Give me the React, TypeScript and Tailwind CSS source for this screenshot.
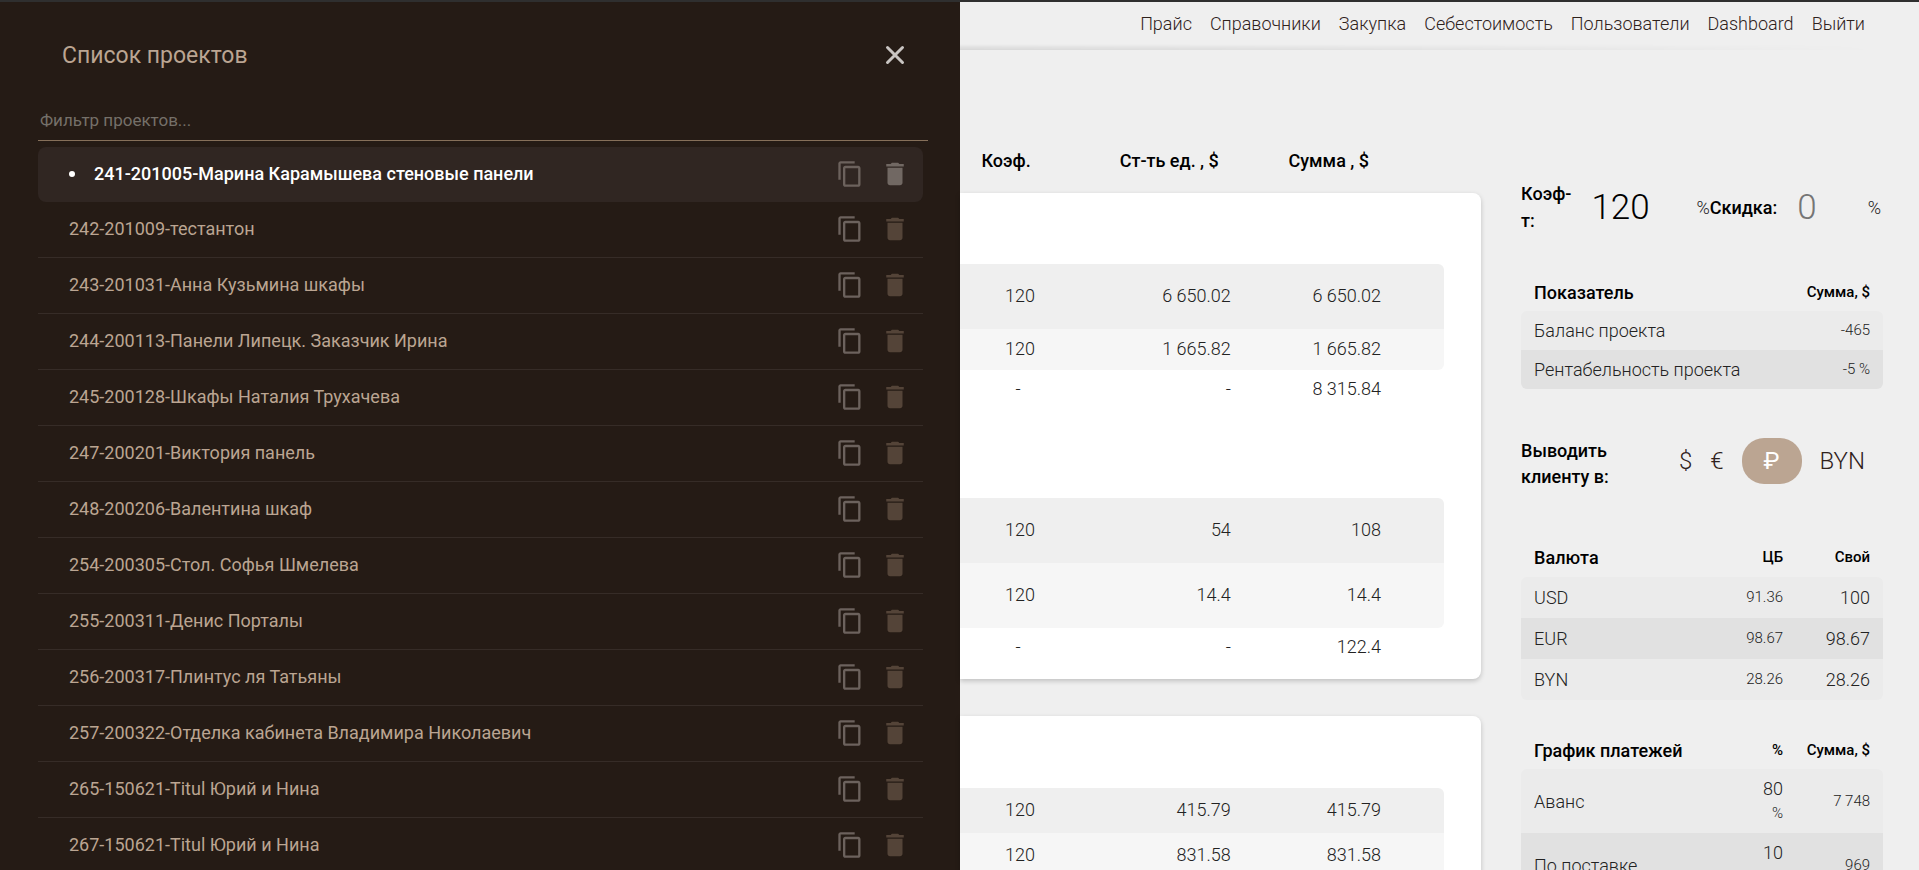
import { useState } from "react"
import { MdContentCopy, MdDelete } from "react-icons/md"

interface IProject {
    id: number
    name: string
}

interface IRow {
    coef: string
    price: string
    total: string
    size: string
}

const projects: IProject[] = [
    { id: 241, name: "241-201005-Марина Карамышева стеновые панели" },
    { id: 242, name: "242-201009-тестантон" },
    { id: 243, name: "243-201031-Анна Кузьмина шкафы" },
    { id: 244, name: "244-200113-Панели Липецк. Заказчик Ирина" },
    { id: 245, name: "245-200128-Шкафы Наталия Трухачева" },
    { id: 247, name: "247-200201-Виктория панель" },
    { id: 248, name: "248-200206-Валентина шкаф" },
    { id: 254, name: "254-200305-Стол. Софья Шмелева" },
    { id: 255, name: "255-200311-Денис Порталы" },
    { id: 256, name: "256-200317-Плинтус ля Татьяны" },
    { id: 257, name: "257-200322-Отделка кабинета Владимира Николаевич" },
    { id: 265, name: "265-150621-Titul Юрий и Нина" },
    { id: 267, name: "267-150621-Titul Юрий и Нина" },
]

const links = ["Прайс", "Справочники", "Закупка", "Себестоимость", "Пользователи", "Dashboard", "Выйти"]

const rates = [
    { code: "USD", cb: "91.36", own: "100" },
    { code: "EUR", cb: "98.67", own: "98.67" },
    { code: "BYN", cb: "28.26", own: "28.26" },
]

const payments = [
    { name: "Аванс", percent: "80", sum: "7 748" },
    { name: "По поставке", percent: "10", sum: "969" },
]

const ProjectsDrawer = () => {
    const [activeId, setActiveId] = useState(241)
    const [filter, setFilter] = useState("")

    const visible = projects.filter((project) => project.name.toLowerCase().includes(filter.toLowerCase()))

    return (
        <aside className="w-1/2 shrink-0 bg-[#251b15] pl-[38px] pr-8 overflow-hidden text-[#bba592]">
            <div className="flex justify-between items-center h-[106px] pl-6 pr-[21px]">
                <h2 className="pt-[2px] text-[23px]">Список проектов</h2>
                <button aria-label="Закрыть" className="text-[#c9c5c2]">
                    <svg viewBox="0 0 24 24" className="size-6" fill="none" stroke="currentColor" strokeWidth="3" strokeLinecap="round">
                        <path d="M4.5 4.5l15 15M19.5 4.5l-15 15" />
                    </svg>
                </button>
            </div>
            <input
                type="text"
                aria-label="Фильтр проектов"
                placeholder="Фильтр проектов..."
                value={filter}
                onChange={(e) => setFilter(e.target.value)}
                className="block w-full h-[33px] pl-[2px] pb-2 border-b border-[#86705a] text-[17px] outline-none placeholder:text-[#757069]"
            />
            <ul className="mt-[6px] mr-[5px]">
                {visible.map((project) => (
                    <li
                        key={project.id}
                        className={
                            project.id === activeId
                                ? "flex items-center h-[55px] rounded-lg pl-[31px] pr-[13px] pb-[2px] bg-[#302622] text-white font-medium"
                                : "flex items-center h-14 border-b border-[#362c27] pl-[31px] pr-[13px] pb-[2px]"
                        }
                    >
                        {project.id === activeId && <span className="size-[6px] rounded-full bg-white mr-[19px]" />}
                        <button onClick={() => setActiveId(project.id)} className="grow text-left text-[18px]">
                            {project.name}
                        </button>
                        <button aria-label="Копировать" className="text-[#6c625d] mr-4">
                            <MdContentCopy className="size-7" />
                        </button>
                        <button aria-label="Удалить" className={project.id === activeId ? "text-[#716863]" : "text-[#544438]"}>
                            <MdDelete className="size-[30px]" />
                        </button>
                    </li>
                ))}
            </ul>
        </aside>
    )
}

const PriceTable = ({ rows, total }: { rows: IRow[]; total?: string }) => (
    <table className="w-full table-fixed border-separate border-spacing-0 text-[18px] font-light text-[#222] [&_td]:pb-[2px]">
        <colgroup>
            <col className="w-[25%]" />
            <col className="w-[31%]" />
            <col className="w-[31%]" />
            <col className="w-[13%]" />
        </colgroup>
        <tbody>
            {rows.map((row, i) => (
                <tr key={i} className={i % 2 === 0 ? "bg-[#efefef]" : "bg-[#f6f6f6]"}>
                    <td className={"text-center " + row.size}>{row.coef}</td>
                    <td className="text-right">{row.price}</td>
                    <td className="text-right">{row.total}</td>
                    <td className={i === 0 ? "rounded-tr-md" : "rounded-br-md"}></td>
                </tr>
            ))}
            {total && (
                <tr>
                    <td className="h-[38px] text-center pr-1">-</td>
                    <td className="text-right">-</td>
                    <td className="text-right">{total}</td>
                    <td></td>
                </tr>
            )}
        </tbody>
    </table>
)

const Estimate = () => (
    <main className="grow min-w-0">
        <div className="grid grid-cols-[25%_31%_31%_13%] items-center mt-[93px] mr-[37px] h-[34px] text-[18px] font-medium text-black">
            <span className="text-center pr-7">Коэф.</span>
            <span className="text-right pr-3">Ст-ть ед. , $</span>
            <span className="text-right pr-3">Сумма , $</span>
        </div>
        <section className="mt-4 rounded-r-lg bg-white shadow-[0_2px_5px_rgba(0,0,0,0.2)] pt-[71px] pr-[37px] pb-[13px]">
            <PriceTable
                total="8 315.84"
                rows={[
                    { coef: "120", price: "6 650.02", total: "6 650.02", size: "h-[65px]" },
                    { coef: "120", price: "1 665.82", total: "1 665.82", size: "h-[41px]" },
                ]}
            />
            <div className="h-[90px]" />
            <PriceTable
                total="122.4"
                rows={[
                    { coef: "120", price: "54", total: "108", size: "h-[65px]" },
                    { coef: "120", price: "14.4", total: "14.4", size: "h-[65px]" },
                ]}
            />
        </section>
        <section className="mt-[37px] rounded-r-lg bg-white shadow-[0_2px_5px_rgba(0,0,0,0.2)] pt-[72px] pr-[37px] pb-[13px]">
            <PriceTable
                rows={[
                    { coef: "120", price: "415.79", total: "415.79", size: "h-[45px]" },
                    { coef: "120", price: "831.58", total: "831.58", size: "h-[45px]" },
                ]}
            />
        </section>
    </main>
)

const sideTable = "w-full table-fixed border-separate border-spacing-0 text-[18px] font-light text-[#222]"
const bodyRows =
    "[&_tr]:bg-[#ebebeb] [&_tr:nth-child(even)]:bg-[#e1e1e1] [&_tr:first-child_td:first-child]:rounded-tl-md [&_tr:first-child_td:last-child]:rounded-tr-md [&_tr:last-child_td:first-child]:rounded-bl-md [&_tr:last-child_td:last-child]:rounded-br-md"

const Summary = () => {
    const [currency, setCurrency] = useState("₽")

    return (
        <aside className="w-[362px] shrink-0 ml-10 mr-9 pt-[130px]">
            <div className="flex items-center h-[54px] text-[18px] leading-[27px]">
                <label htmlFor="coef" className="w-[52px] font-medium text-black">
                    Коэф-т:
                </label>
                <input id="coef" defaultValue="120" className="w-[105px] ml-5 text-[35px] font-light text-black outline-none" />
                <span className="font-light text-[#222]">%</span>
                <label htmlFor="discount" className="font-medium text-black">
                    Скидка:
                </label>
                <input id="discount" placeholder="0" className="grow min-w-0 ml-5 text-[35px] font-light outline-none placeholder:text-[#757575]" />
                <span className="pr-[2px] font-light text-[#222]">%</span>
            </div>

            <table className={sideTable + " mt-[39px]"}>
                <thead className="text-black">
                    <tr>
                        <th className="h-[38px] pl-[13px] text-left font-medium">Показатель</th>
                        <th className="w-[110px] pr-[13px] text-right text-[15px] font-medium">Сумма, $</th>
                    </tr>
                </thead>
                <tbody className={bodyRows}>
                    <tr>
                        <td className="h-[39px] pl-[13px]">Баланс проекта</td>
                        <td className="pr-[13px] text-right text-[15px]">-465</td>
                    </tr>
                    <tr>
                        <td className="h-[39px] pl-[13px]">Рентабельность проекта</td>
                        <td className="pr-[13px] text-right text-[15px]">-5 %</td>
                    </tr>
                </tbody>
            </table>

            <div className="flex justify-between items-start mt-[49px] h-[52px]">
                <span className="w-[100px] text-[18px] leading-[26px] font-medium text-black">Выводить клиенту в:</span>
                <div className="flex items-center gap-[18px] pr-[18px] text-[24px] font-light text-[#2f221c]">
                    {["$", "€", "₽", "BYN"].map((item) => (
                        <button
                            key={item}
                            onClick={() => setCurrency(item)}
                            className={item === currency ? "w-[60px] h-[46px] rounded-[22px] bg-[#bba592] text-white font-normal" : ""}
                        >
                            {item}
                        </button>
                    ))}
                </div>
            </div>

            <table className={sideTable + " mt-[47px]"}>
                <thead className="text-black">
                    <tr>
                        <th className="h-10 pl-[13px] text-left font-medium">Валюта</th>
                        <th className="w-[80px] text-right text-[15px] font-medium">ЦБ</th>
                        <th className="w-[100px] pr-[13px] text-right text-[15px] font-medium">Свой</th>
                    </tr>
                </thead>
                <tbody className={bodyRows}>
                    {rates.map((rate) => (
                        <tr key={rate.code}>
                            <td className="h-[41px] pl-[13px]">{rate.code}</td>
                            <td className="text-right text-[15px]">{rate.cb}</td>
                            <td className="pr-[13px]">
                                <input aria-label={rate.code} defaultValue={rate.own} className="block w-full text-right outline-none" />
                            </td>
                        </tr>
                    ))}
                </tbody>
            </table>

            <table className={sideTable + " mt-8"}>
                <thead className="text-black">
                    <tr>
                        <th className="h-[37px] pl-[13px] text-left font-medium">График платежей</th>
                        <th className="w-[80px] text-right text-[15px] font-medium">%</th>
                        <th className="w-[100px] pr-[13px] text-right text-[15px] font-medium">Сумма, $</th>
                    </tr>
                </thead>
                <tbody className={bodyRows}>
                    {payments.map((payment) => (
                        <tr key={payment.name}>
                            <td className="h-16 pl-[13px]">{payment.name}</td>
                            <td className="text-right text-[15px] leading-6">
                                <input
                                    aria-label={payment.name}
                                    defaultValue={payment.percent}
                                    className="block w-full text-right text-[18px] outline-none"
                                />
                                %
                            </td>
                            <td className="pr-[13px] text-right text-[15px]">{payment.sum}</td>
                        </tr>
                    ))}
                </tbody>
            </table>
        </aside>
    )
}

const App = () => {
    return (
        <div className="flex h-screen overflow-hidden border-t-2 border-[#2f2f2f] bg-[#efefef] font-[Roboto,sans-serif]">
            <ProjectsDrawer />
            <div className="flex flex-col grow min-w-0">
                <header className="flex flex-col justify-end h-12 shrink-0">
                    <nav className="flex grow justify-end items-center gap-[18px] pr-[54px] text-[18px] font-light text-[#2f221c]">
                        {links.map((link) => (
                            <a key={link} href="#">
                                {link}
                            </a>
                        ))}
                    </nav>
                    <div className="h-[6px] mr-9 bg-linear-to-t from-black/10 to-transparent [mask-image:linear-gradient(to_right,black,transparent)]" />
                </header>
                <div className="flex">
                    <Estimate />
                    <Summary />
                </div>
            </div>
        </div>
    )
}

export default App
